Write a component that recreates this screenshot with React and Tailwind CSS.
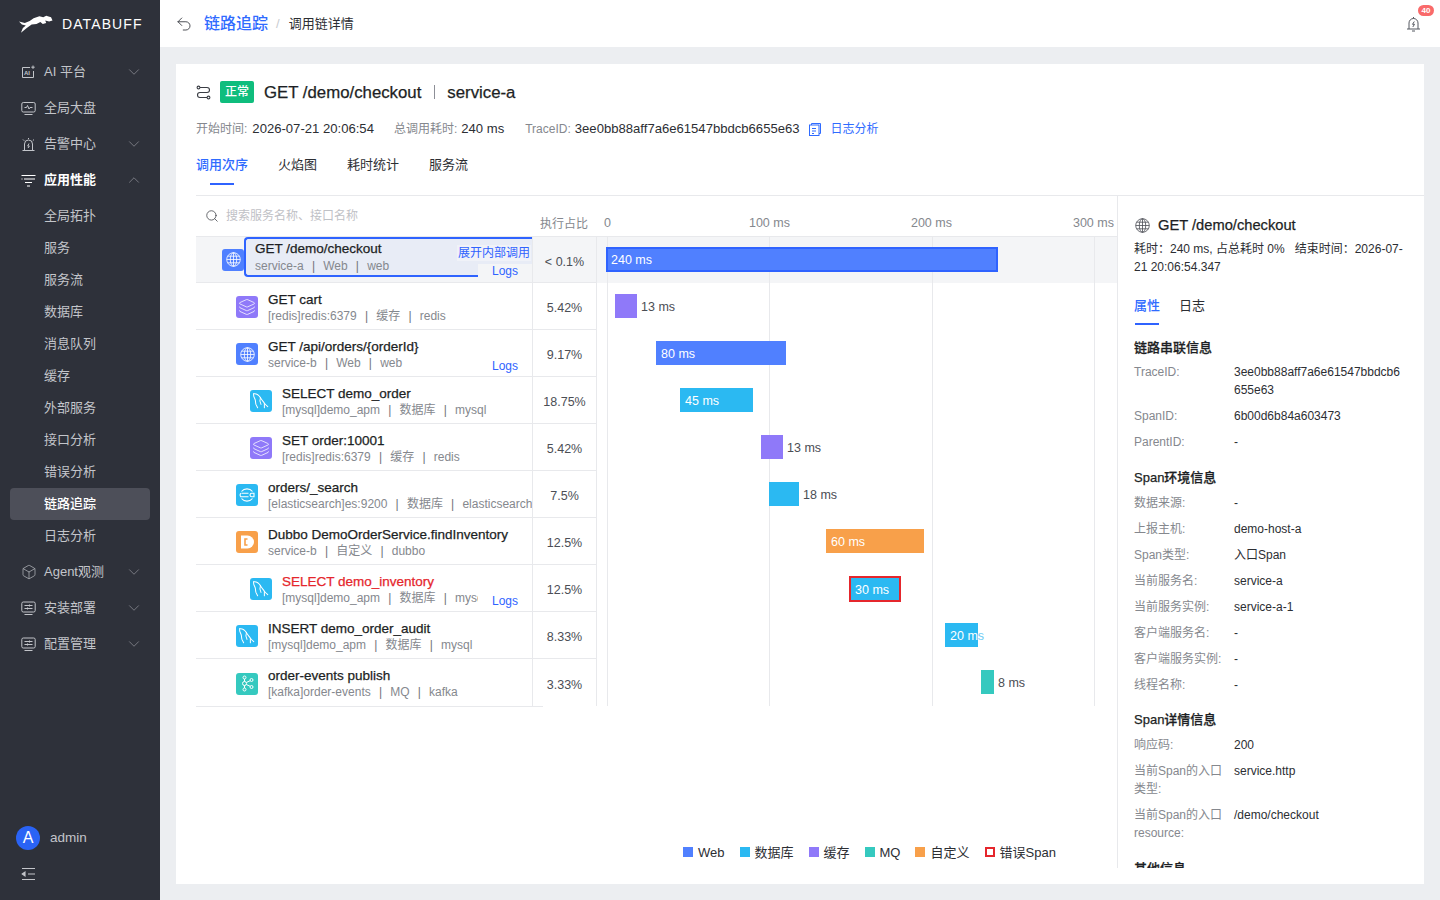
import React from "react";
import { ChevronDown, ChevronUp, Layers, Box, Search, Undo2 } from "lucide-react";

const COLORS = {
    web: "bg-[#5080ff]",
    db: "bg-[#2bb9f2]",
    cache: "bg-[#8f79f9]",
    mq: "bg-[#35c9bf]",
    custom: "bg-[#f8a04a]",
};

const MEDIUM = "[-webkit-text-stroke:0.25px]";

function AiIcon() {
    return (
        <svg width="15" height="15" viewBox="0 0 15 15" fill="none" stroke="currentColor" strokeWidth="1">
            <path d="M9 2.5H1.5v10h11V6" />
            <path d="M12 .5v3.4M10.3 2.2h3.4" />
            <text x="3" y="10" fontSize="6" fill="currentColor" stroke="none" fontWeight="700">AI</text>
        </svg>
    );
}

function PulseIcon() {
    return (
        <svg width="15" height="15" viewBox="0 0 15 15" fill="none" stroke="currentColor" strokeWidth="1">
            <rect x=".8" y="1.5" width="13.4" height="9.5" rx="1.5" />
            <path d="M3.5 6.5h2l1-2 1.5 3.5 1-1.5h2.5" />
            <path d="M3.5 13.5h8" />
        </svg>
    );
}

function AlarmIcon() {
    return (
        <svg width="15" height="15" viewBox="0 0 15 15" fill="none" stroke="currentColor" strokeWidth="1">
            <path d="M3.5 13V7a4 4 0 0 1 8 0v6" />
            <path d="M1.5 13.5h12M7.5 1v1M2 2.5l1.2 1.2M13 2.5l-1.2 1.2" />
            <path d="M8 6.5 6.7 9h1.6L7 11" />
        </svg>
    );
}

function PerfIcon() {
    return (
        <svg width="15" height="15" viewBox="0 0 15 15" fill="none" stroke="currentColor" strokeWidth="1">
            <path d="M.5 2.5h14M3 6h11M.5 6h1M4 9.5h7M6 13h3" />
        </svg>
    );
}

function DeployIcon() {
    return (
        <svg width="15" height="15" viewBox="0 0 15 15" fill="none" stroke="currentColor" strokeWidth="1">
            <rect x=".8" y="1" width="13.4" height="10" rx="1.5" />
            <path d="M3.5 4.5h8M3.5 7.5h8M3.5 13.5h8" />
            <path d="M8.5 3.5v2M6.5 6.5v2" />
        </svg>
    );
}

function CollapseIcon() {
    return (
        <svg width="15" height="14" viewBox="0 0 15 14" fill="none" stroke="currentColor" strokeWidth="1.1">
            <path d="M1 1.5h13M7 7h7M1 12.5h13" />
            <path d="M1.2 7 4 5v4z" fill="currentColor" />
        </svg>
    );
}

function TraceIcon() {
    return (
        <svg width="15" height="15" viewBox="0 0 15 15" fill="none" stroke="#3a3d44" strokeWidth="1.1">
            <circle cx="2.5" cy="2.5" r="1.4" />
            <path d="M4 2.5h7a2.5 2.5 0 0 1 0 5H4a2.5 2.5 0 0 0 0 5h7" />
            <circle cx="12.5" cy="12.5" r="1.4" />
        </svg>
    );
}

function BellIcon() {
    return (
        <svg width="15" height="16" viewBox="0 0 15 16" fill="none" stroke="#555860" strokeWidth="1">
            <path d="M3 13V7a4.5 4.5 0 0 1 9 0v6" />
            <path d="M1 13h13M6 15h3M7.5 1v1.5" />
            <path d="M8.3 5.5 6.5 8.3h2L6.8 11" />
        </svg>
    );
}

function GlobeIcon({ className }) {
    return (
        <svg className={className} width="15" height="15" viewBox="0 0 15 15" fill="none" stroke="currentColor" strokeWidth=".8">
            <circle cx="7.5" cy="7.5" r="6.8" />
            <ellipse cx="7.5" cy="7.5" rx="3.2" ry="6.8" />
            <path d="M7.5.7v13.600M.7 7.500h13.600M1.600 4.200h11.800M1.600 10.800h11.800" />
        </svg>
    );
}

function DolphinIcon() {
    return (
        <svg width="18" height="18" viewBox="0 0 16 16" fill="none" stroke="#fff" strokeWidth=".9" strokeLinecap="round">
            <path d="M1.5 1.5c2.5-.3 4.500 1 6 3.500 1 2 2.500 3.500 3.500 5 .7 1 1.800 2 3 3" />
            <path d="M1.500 1.500c-.5 2 .5 3.500 1.200 5 .6 1.500.3 3 .8 4.500l1.500 3" />
            <path d="M7.500 5c-.8 2-.6 4 .5 6M11 10v4" />
        </svg>
    );
}

function EsIcon() {
    return (
        <svg width="16" height="16" viewBox="0 0 16 16" fill="none" stroke="#fff" strokeWidth="1.1">
            <path d="M2.500 4.500A7 7 0 0 1 13.500 4.500M2.500 11.500A7 7 0 0 0 13.500 11.500" />
            <path d="M2.500 6.300h7M1.500 9.700h8" />
            <path d="M11 8a1.800 1.800 0 0 1 1.800-1.700H15v3.400h-2.200A1.800 1.800 0 0 1 11 8z" />
            <path d="M2 6.300a2 2 0 0 0 0 3.400" />
        </svg>
    );
}

function DubboIcon() {
    return (
        <svg width="22" height="22" viewBox="0 0 22 22">
            <path d="M5 4.500h6.500a6.500 6.500 0 0 1 0 13H5z" fill="#fff" />
            <path d="M11.500 8H9v6h2.500" fill="none" stroke="#f8a04a" strokeWidth="1.600" />
        </svg>
    );
}

function KafkaIcon() {
    return (
        <svg width="16" height="17" viewBox="0 0 16 17" fill="none" stroke="#fff" strokeWidth="1">
            <circle cx="5.500" cy="2.500" r="1.500" />
            <circle cx="5.500" cy="8.500" r="2" />
            <circle cx="5.500" cy="14.500" r="1.500" />
            <circle cx="12.500" cy="5" r="1.500" />
            <circle cx="12.500" cy="12" r="1.500" />
            <path d="M5.500 4v2.500M5.500 10.500V13M7.300 7.500l3.900-1.800M7.300 9.500l3.900 1.800" />
        </svg>
    );
}

function NodeIcon({ type }) {
    const base = "w-[22px] h-[22px] rounded-[3px] flex items-center justify-center shrink-0 text-white";
    if (type === "web")
        return <div className={`${base} ${COLORS.web}`}><GlobeIcon /></div>;
    if (type === "redis")
        return <div className={`${base} ${COLORS.cache}`}><Layers size={18} strokeWidth={1} /></div>;
    if (type === "mysql")
        return <div className={`${base} ${COLORS.db}`}><DolphinIcon /></div>;
    if (type === "es")
        return <div className={`${base} ${COLORS.db}`}><EsIcon /></div>;
    if (type === "dubbo")
        return <div className={`${base} ${COLORS.custom}`}><DubboIcon /></div>;
    return <div className={`${base} ${COLORS.mq}`}><KafkaIcon /></div>;
}

const menu = [
    { label: "AI 平台", icon: <AiIcon />, arrow: "down" },
    { label: "全局大盘", icon: <PulseIcon /> },
    { label: "告警中心", icon: <AlarmIcon />, arrow: "down" },
    { label: "应用性能", icon: <PerfIcon />, arrow: "up", open: true },
];

const subMenu = ["全局拓扑", "服务", "服务流", "数据库", "消息队列", "缓存", "外部服务", "接口分析", "错误分析", "链路追踪", "日志分析"];

const menuBottom = [
    { label: "Agent观测", icon: <Box size={16} strokeWidth={1} />, arrow: "down" },
    { label: "安装部署", icon: <DeployIcon />, arrow: "down" },
    { label: "配置管理", icon: <DeployIcon />, arrow: "down" },
];

const spans = [
    { name: "GET /demo/checkout", meta: ["service-a", "Web", "web"], type: "web", depth: 0, pct: "< 0.1%", color: "web", left: 9, width: 392, ms: "240 ms", inside: true, selected: true },
    { name: "GET cart", meta: ["[redis]redis:6379", "缓存", "redis"], type: "redis", depth: 1, pct: "5.42%", color: "cache", left: 18, width: 22, ms: "13 ms" },
    { name: "GET /api/orders/{orderId}", meta: ["service-b", "Web", "web"], type: "web", depth: 1, pct: "9.17%", color: "web", left: 59, width: 130, ms: "80 ms", inside: true, logs: true },
    { name: "SELECT demo_order", meta: ["[mysql]demo_apm", "数据库", "mysql"], type: "mysql", depth: 2, pct: "18.75%", color: "db", left: 83, width: 73, ms: "45 ms", inside: true },
    { name: "SET order:10001", meta: ["[redis]redis:6379", "缓存", "redis"], type: "redis", depth: 2, pct: "5.42%", color: "cache", left: 164, width: 22, ms: "13 ms" },
    { name: "orders/_search", meta: ["[elasticsearch]es:9200", "数据库", "elasticsearch"], type: "es", depth: 1, pct: "7.5%", color: "db", left: 172, width: 30, ms: "18 ms" },
    { name: "Dubbo DemoOrderService.findInventory", meta: ["service-b", "自定义", "dubbo"], type: "dubbo", depth: 1, pct: "12.5%", color: "custom", left: 229, width: 98, ms: "60 ms", inside: true },
    { name: "SELECT demo_inventory", meta: ["[mysql]demo_apm", "数据库", "mysql"], type: "mysql", depth: 2, pct: "12.5%", color: "db", left: 252, width: 52, ms: "30 ms", inside: true, error: true, logs: true },
    { name: "INSERT demo_order_audit", meta: ["[mysql]demo_apm", "数据库", "mysql"], type: "mysql", depth: 1, pct: "8.33%", color: "db", left: 348, width: 33, ms: "20 m", tail: "s", inside: true },
    { name: "order-events publish", meta: ["[kafka]order-events", "MQ", "kafka"], type: "kafka", depth: 1, pct: "3.33%", color: "mq", left: 383.5, width: 13.5, ms: "8 ms", last: true },
];

const chain = [
    ["TraceID:", "3ee0bb88aff7a6e61547bbdcb6655e63"],
    ["SpanID:", "6b00d6b84a603473"],
    ["ParentID:", "-"],
];

const env = [
    ["数据来源:", "-"],
    ["上报主机:", "demo-host-a"],
    ["Span类型:", "入口Span"],
    ["当前服务名:", "service-a"],
    ["当前服务实例:", "service-a-1"],
    ["客户端服务名:", "-"],
    ["客户端服务实例:", "-"],
    ["线程名称:", "-"],
];

const detail = [
    ["响应码:", "200"],
    ["当前Span的入口类型:", "service.http"],
    ["当前Span的入口resource:", "/demo/checkout"],
];

function MenuItem({ item }) {
    return (
        <div className={`h-9 pl-[21px] pr-[17px] flex items-center text-[13px] ${item.open ? "text-white font-bold" : "text-[#c3c5ca]"}`}>
            <span className="w-[23px] shrink-0 flex">{item.icon}</span>
            <span className="flex-1">{item.label}</span>
            {item.arrow === "down" && <ChevronDown size={18} strokeWidth={1} className="text-[#8d8f97]" />}
            {item.arrow === "up" && <ChevronUp size={18} strokeWidth={1} className="text-[#8d8f97]" />}
        </div>
    );
}

function Sidebar() {
    return (
        <aside className="w-[160px] shrink-0 h-full bg-[#2e313a] flex flex-col">
            <div className="h-[48px] mb-[6px] pl-[19px] flex items-center gap-[9px] text-white">
                <svg width="34" height="18" viewBox="0 0 35 18" fill="#fff">
                    <path d="M0 6.500 6 8l5-2 4-3 6-2 4 1 3-1.500 5 1.500 1.500 3.500-3.500 1-4-1 1 2.500-3.500 1-2.500-2-4 2-5 .5-5 3.500-6 5 2-5 3-2.500-4-1z" />
                </svg>
                <span className="text-[14px] tracking-[1.1px] leading-none">DATABUFF</span>
            </div>
            <div>
                {menu.map((m) => <MenuItem key={m.label} item={m} />)}
                <div className="py-[2px]">
                    {subMenu.map((s) => (
                        <div key={s} className={`h-8 mx-[10px] pl-[34px] flex items-center text-[13px] rounded-[4px] ${s === "链路追踪" ? "bg-[#4d4f59] text-white font-medium" : "text-[#c3c5ca]"}`}>
                            {s}
                        </div>
                    ))}
                </div>
                {menuBottom.map((m) => <MenuItem key={m.label} item={m} />)}
            </div>
            <div className="mt-auto pl-4 pb-[19px]">
                <div className="flex items-center gap-[10px]">
                    <div className="w-6 h-6 rounded-full bg-[#2a63f5] text-white text-[16px] flex items-center justify-center">A</div>
                    <span className="text-[13.5px] pt-px text-[#c3c5ca]">admin</span>
                </div>
                <div className="mt-[17px] pl-[5px] text-[#c3c5ca]"><CollapseIcon /></div>
            </div>
        </aside>
    );
}

function Row({ span }) {
    const pad = { 0: "pl-[26px]", 1: "pl-[40px]", 2: "pl-[54px]" }[span.depth];
    const line = span.last ? "" : "border-b border-[#e8e9ec]";
    return (
        <div className={`flex ${span.selected ? "h-[46px] bg-[#f4f5f7]" : "h-[47px]"}`}>
            <div className={`relative w-[337px] shrink-0 overflow-hidden flex items-center border-r border-[#e8e9ec] ${line} ${pad} ${span.selected ? "" : "pt-[2px]"}`}>
                <NodeIcon type={span.type} />
                <div className={`min-w-0 ${span.selected ? "self-start flex-1 h-10 pl-[9px] pt-px border-2 border-r-0 border-[#2f63ff] rounded-l-[4px] bg-[#e8ecf6]" : "pl-[10px]"}`}>
                    <div className={`text-[13.5px] leading-[18px] whitespace-nowrap ${MEDIUM} ${span.error ? "text-[#e5262c]" : "text-[#1d1f24]"}`}>{span.name}</div>
                    <div className={`text-[12px] leading-[15px] text-[#85888e] whitespace-nowrap ${span.selected ? "mt-px" : ""}`}>
                        {span.meta.map((m, i) => (
                            <span key={m}>
                                {i > 0 && <span className="mx-[8.2px] text-[#70737a]">|</span>}
                                {m}
                            </span>
                        ))}
                    </div>
                </div>
                {span.selected && (
                    <>
                        <span className="absolute right-[1px] top-[8px] px-px text-[12px] leading-[16px] text-[#2f63ff] bg-[#f0f2f8]">展开内部调用</span>
                        <span className="absolute right-0 top-[27px] w-[54px] h-[19px] text-center text-[12px] leading-[15px] text-[#2f63ff] bg-[#f4f5f7]">Logs</span>
                    </>
                )}
                {span.logs && (
                    <span className="absolute right-0 bottom-[1px] w-[54px] h-[24px] pt-[6px] pr-[14px] text-right text-[12px] leading-[18px] text-[#2f63ff] bg-white">Logs</span>
                )}
            </div>
            <div className={`w-[64px] shrink-0 flex items-center justify-center pt-[5px] text-[12.5px] text-[#4b4e55] border-r border-[#e8e9ec] ${line}`}>{span.pct}</div>
            <Timeline span={span} />
        </div>
    );
}

function Timeline({ span }) {
    return (
        <div className="relative flex-1 flex items-center pb-px">
            <div className="absolute top-0 bottom-0 left-[10px] w-px bg-[#e8e9ec]" />
            <div className="absolute top-0 bottom-0 left-[172px] w-px bg-[#e8e9ec]" />
            <div className="absolute top-0 bottom-0 left-[335px] w-px bg-[#e8e9ec]" />
            <div className="absolute top-0 bottom-0 left-[497px] w-px bg-[#e8e9ec]" />
            <div
                className={`relative shrink-0 text-[12.5px] text-white whitespace-nowrap ${COLORS[span.color]} ${span.selected ? "h-[25px] border-2 border-[#2f63ff] leading-[22px] pl-[3px]" : span.error ? "h-[26px] mt-[2px] border-2 border-[#e5262c] leading-[24px] pl-[4px]" : "h-6 leading-[26px] pl-[5px]"}`}
                style={{ marginLeft: span.left, width: span.width }}
            >
                {span.inside && span.ms}
                {span.tail && <span className="text-[#6fcdf5]">{span.tail}</span>}
            </div>
            {!span.inside && <span className="relative ml-[4px] pt-[2px] text-[12.5px] text-[#4b4e55]">{span.ms}</span>}
        </div>
    );
}

function Legend() {
    const items = [
        ["Web", COLORS.web],
        ["数据库", COLORS.db],
        ["缓存", COLORS.cache],
        ["MQ", COLORS.mq],
        ["自定义", COLORS.custom],
        ["错误Span", "border-2 border-[#e5262c]"],
    ];
    return (
        <div className="absolute left-[507px] bottom-[22px] flex gap-[15px] text-[13px] text-[#2c2e33]">
            {items.map(([label, cls]) => (
                <div key={label} className="flex items-center gap-[5px]">
                    <span className={`w-[10px] h-[10px] ${cls}`} />
                    {label}
                </div>
            ))}
        </div>
    );
}

function InfoSection({ title, rows, className, titleGap = "mb-[7px]" }) {
    return (
        <div className={className}>
            <div className={`text-[13px] leading-[18px] font-medium text-[#1d1f24] ${MEDIUM} ${titleGap}`}>{title}</div>
            <div className="flex flex-col gap-2">
                {rows.map(([k, v]) => (
                    <div key={k} className="flex text-[12px] leading-[18px]">
                        <div className="w-[100px] shrink-0 pr-2 text-[#85888e] break-words">{k}</div>
                        <div className="flex-1 min-w-0 pr-[6px] text-[#2c2e33] break-all">{v}</div>
                    </div>
                ))}
            </div>
        </div>
    );
}

function DetailPanel() {
    return (
        <div className="w-[307px] shrink-0 h-[672px] overflow-hidden border-l border-[#e8e9ec] pl-4 pr-4 pt-[20px]">
            <div className="flex items-center gap-[8px] pl-px text-[#2c2e33]">
                <GlobeIcon className="text-[#4b4e55]" />
                <span className={`text-[14.7px] leading-[18px] text-[#1d1f24] ${MEDIUM}`}>GET /demo/checkout</span>
            </div>
            <p className="mt-[6px] text-[12px] leading-[18px] text-[#2c2e33]">耗时：240 ms, 占总耗时 0%&nbsp;&nbsp;&nbsp;结束时间：2026-07-21 20:06:54.347</p>
            <div className="mt-[21px] flex gap-[19px] text-[13px] leading-[18px]">
                <div className="relative text-[#2f6bff] font-medium pb-[10px]">
                    属性
                    <span className="absolute left-px right-px bottom-0 h-[2px] bg-[#2f63ff]" />
                </div>
                <div className="text-[#2c2e33]">日志</div>
            </div>
            <InfoSection className="mt-[14px]" titleGap="mb-[6px]" title="链路串联信息" rows={chain} />
            <InfoSection className="mt-[18px]" title="Span环境信息" rows={env} />
            <InfoSection className="mt-[17px]" title="Span详情信息" rows={detail} />
            <div className={`mt-[18px] text-[13px] leading-[18px] font-medium text-[#1d1f24] ${MEDIUM}`}>其他信息</div>
        </div>
    );
}

export default function App() {
    return (
        <div className="flex h-screen overflow-hidden bg-[#eceef1] [font-family:'Liberation_Sans','Noto_Sans_CJK_SC',sans-serif]">
            <Sidebar />
            <main className="flex-1 min-w-0 flex flex-col">
                <header className="h-[47px] shrink-0 bg-white flex items-center pl-[15px] pr-[6px]">
                    <Undo2 size={18} strokeWidth={1.2} className="text-[#3a3d44]" />
                    <span className="ml-[11px] text-[16px] font-medium text-[#2f6bff]">链路追踪</span>
                    <span className="ml-[8px] mr-[9px] text-[13px] text-[#c9cbd0]">/</span>
                    <span className="text-[13px] text-[#2c2e33]">调用链详情</span>
                    <div className="relative ml-auto mr-[13px] flex">
                        <BellIcon />
                        <span className="absolute -right-[13px] -top-[11px] w-4 h-[11px] rounded-full bg-[#f96a6a] text-white text-[8px] font-bold leading-[11px] text-center">40</span>
                    </div>
                </header>
                <div className="flex-1 min-h-0 p-4 pt-[17px]">
                    <div className="relative h-[820px] bg-white">
                        <div className="px-5 pt-[17px]">
                            <div className="h-[22px] flex items-center">
                                <TraceIcon />
                                <span className="ml-[9px] w-[34px] h-[22px] rounded-[2px] bg-[#0fbd7d] text-white text-[12px] font-medium leading-[22px] text-center">正常</span>
                                <span className={`ml-[10px] pt-[2px] text-[16.8px] text-[#1d1f24] ${MEDIUM}`}>GET /demo/checkout</span>
                                <span className="mx-[12.5px] w-px h-[14px] bg-[#8d8f97]" />
                                <span className={`pt-[2px] text-[16.8px] text-[#1d1f24] ${MEDIUM}`}>service-a</span>
                            </div>
                            <div className="mt-[17px] h-[18px] flex items-center text-[12px]">
                                <span className="text-[#85888e]">开始时间:</span>
                                <span className="ml-[5px] text-[13.1px] text-[#2c2e33]">2026-07-21 20:06:54</span>
                                <span className="ml-5 text-[#85888e]">总调用耗时:</span>
                                <span className="ml-[4px] text-[13.1px] text-[#2c2e33]">240 ms</span>
                                <span className="ml-[21px] text-[#85888e]">TraceID:</span>
                                <span className="ml-[4px] text-[13.1px] text-[#2c2e33]">3ee0bb88aff7a6e61547bbdcb6655e63</span>
                                <svg className="ml-[9px]" width="12" height="13" viewBox="0 0 12 13" fill="none" stroke="#2f6bff" strokeWidth="1">
                                    <path d="M2.500 2V.5h9v10H10" />
                                    <rect x=".5" y="2" width="9.500" height="10.500" />
                                    <path d="M3 5.500h4M3 8h4M3 10.500h2" />
                                </svg>
                                <span className="ml-[10px] text-[#2f6bff]">日志分析</span>
                            </div>
                            <div className="mt-[18px] flex gap-[30px] text-[13px] leading-[18px]">
                                <div className="relative text-[#2f6bff] font-medium pb-[11px]">
                                    调用次序
                                    <span className="absolute left-[14px] w-6 bottom-0 h-[2px] bg-[#2f63ff]" />
                                </div>
                                <div className="text-[#2c2e33]">火焰图</div>
                                <div className="text-[#2c2e33]">耗时统计</div>
                                <div className="text-[#2c2e33]">服务流</div>
                            </div>
                        </div>
                        <div className="ml-5 mt-[10px] border-t border-[#e8e9ec] flex">
                            <div className="w-[921px] shrink-0">
                                <div className="h-[41px] flex border-b border-[#e8e9ec]">
                                    <div className="w-[337px] shrink-0 flex items-center pl-[9px] pb-px gap-[7px] text-[12px] text-[#bfc1c6]">
                                        <Search size={14} strokeWidth={1.3} className="text-[#3a3d44]" />
                                        搜索服务名称、接口名称
                                    </div>
                                    <div className="w-[64px] shrink-0 flex items-end justify-center pb-[3px] pr-[2px] text-[12px] text-[#85888e] whitespace-nowrap">执行占比</div>
                                    <div className="flex-1 flex items-end pb-[3px] text-[12.5px] text-[#85888e] whitespace-nowrap">
                                        <span className="ml-[7px]">0</span>
                                        <span className="ml-[138px]">100 ms</span>
                                        <span className="ml-[121px]">200 ms</span>
                                        <span className="ml-[121px]">300 ms</span>
                                    </div>
                                </div>
                                {spans.map((s) => <Row key={s.name} span={s} />)}
                                <div className="w-[347px] h-px bg-[#e8e9ec]" />
                            </div>
                            <DetailPanel />
                        </div>
                        <Legend />
                    </div>
                </div>
            </main>
        </div>
    );
}
